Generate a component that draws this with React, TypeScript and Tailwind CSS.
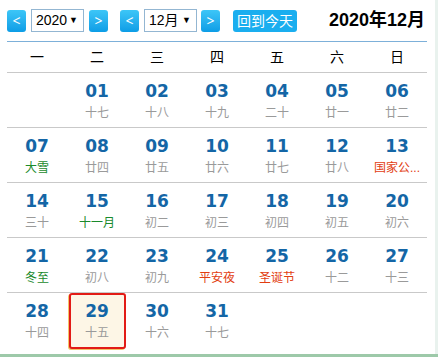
import React from 'react';

type Day = { d: string; sub: string; tone?: 'green' | 'red'; today?: boolean };

const weeks: (Day | null)[][] = [
  [null, { d: '01', sub: '十七' }, { d: '02', sub: '十八' }, { d: '03', sub: '十九' }, { d: '04', sub: '二十' }, { d: '05', sub: '廿一' }, { d: '06', sub: '廿二' }],
  [{ d: '07', sub: '大雪', tone: 'green' }, { d: '08', sub: '廿四' }, { d: '09', sub: '廿五' }, { d: '10', sub: '廿六' }, { d: '11', sub: '廿七' }, { d: '12', sub: '廿八' }, { d: '13', sub: '国家公...', tone: 'red' }],
  [{ d: '14', sub: '三十' }, { d: '15', sub: '十一月', tone: 'green' }, { d: '16', sub: '初二' }, { d: '17', sub: '初三' }, { d: '18', sub: '初四' }, { d: '19', sub: '初五' }, { d: '20', sub: '初六' }],
  [{ d: '21', sub: '冬至', tone: 'green' }, { d: '22', sub: '初八' }, { d: '23', sub: '初九' }, { d: '24', sub: '平安夜', tone: 'red' }, { d: '25', sub: '圣诞节', tone: 'red' }, { d: '26', sub: '十二' }, { d: '27', sub: '十三' }],
  [{ d: '28', sub: '十四' }, { d: '29', sub: '十五', today: true }, { d: '30', sub: '十六' }, { d: '31', sub: '十七' }, null, null, null],
];

const weekdays = ['一', '二', '三', '四', '五', '六', '日'];

const cjk = "font-['Liberation_Sans','Noto_Sans_CJK_SC',sans-serif]";

function NavButton({ label }: { label: string }) {
  return (
    <button className="w-[19px] h-[22px] rounded-[3px] bg-gradient-to-b from-[#3cc6f7] to-[#0b9de6] text-white text-[14px] leading-none flex items-center justify-center">
      {label}
    </button>
  );
}

function Picker({ value }: { value: string }) {
  return (
    <div className={`w-[53px] h-[23px] border border-[#93b6d2] bg-white flex items-center justify-between pl-[4px] pr-[5px] text-[14px] text-black ${cjk}`}>
      <span>{value}</span>
      <span className="text-[9px]">▼</span>
    </div>
  );
}

function Cell({ day }: { day: Day | null }) {
  if (!day) return <div className="h-[54px]" />;
  const subColor =
    day.tone === 'green' ? 'text-[#1a8a2c]' : day.tone === 'red' ? 'text-[#e23d12]' : 'text-[#9a9a9a]';
  return (
    <div className="h-[54px] flex items-start justify-center">
      <div
        className={`flex flex-col items-center ${
          day.today
            ? 'w-[57px] h-[56px] -mb-[2px] border-2 border-[#e21b16] rounded-[3px] bg-[#fdf6e6] shadow-[-1px_1px_0_#f2c46a]'
            : 'w-[57px] h-[54px] border-2 border-transparent'
        }`}
      >
        <span className="mt-[6px] text-[17px] leading-[20px] font-bold text-[#1466a6] font-['DejaVu_Sans',sans-serif]">
          {day.d}
        </span>
        <span className={`mt-[5px] text-[12px] leading-[14px] whitespace-nowrap ${subColor} ${cjk}`}>{day.sub}</span>
      </div>
    </div>
  );
}

export default function App() {
  return (
    <div className="w-[438px] h-[357px] bg-[#e9f2ee] flex flex-col">
      <div className="w-[435px] h-[354px] bg-white">
        <div className="h-[41px] flex items-center pl-[7px] pr-[10px]">
          <NavButton label="<" />
          <div className="ml-[5px]"><Picker value="2020" /></div>
          <div className="ml-[5px]"><NavButton label=">" /></div>
          <div className="ml-[12px]"><NavButton label="<" /></div>
          <div className="ml-[5px]"><Picker value="12月" /></div>
          <div className="ml-[4px]"><NavButton label=">" /></div>
          <button className={`ml-[13px] w-[64px] h-[22px] rounded-[3px] bg-[#1aaeef] text-white text-[14px] leading-none ${cjk}`}>
            回到今天
          </button>
          <div className={`ml-auto text-[18px] font-bold text-black ${cjk}`}>2020年12月</div>
        </div>
        <div className="mx-[7px] w-[420px] border-t border-[#7db0d9]">
          <div className="grid grid-cols-7 h-[31px] border-b border-[#c9c9c9] items-center">
            {weekdays.map((w) => (
              <div key={w} className={`text-center text-[14px] text-black ${cjk}`}>{w}</div>
            ))}
          </div>
          {weeks.map((row, i) => (
            <div key={i} className={`grid grid-cols-7 ${i < weeks.length - 1 ? 'border-b border-[#c9c9c9]' : ''}`}>
              {row.map((day, j) => (
                <Cell key={j} day={day} />
              ))}
            </div>
          ))}
        </div>
      </div>
      <div className="h-[3px] bg-[#9dc9a9]" />
    </div>
  );
}
